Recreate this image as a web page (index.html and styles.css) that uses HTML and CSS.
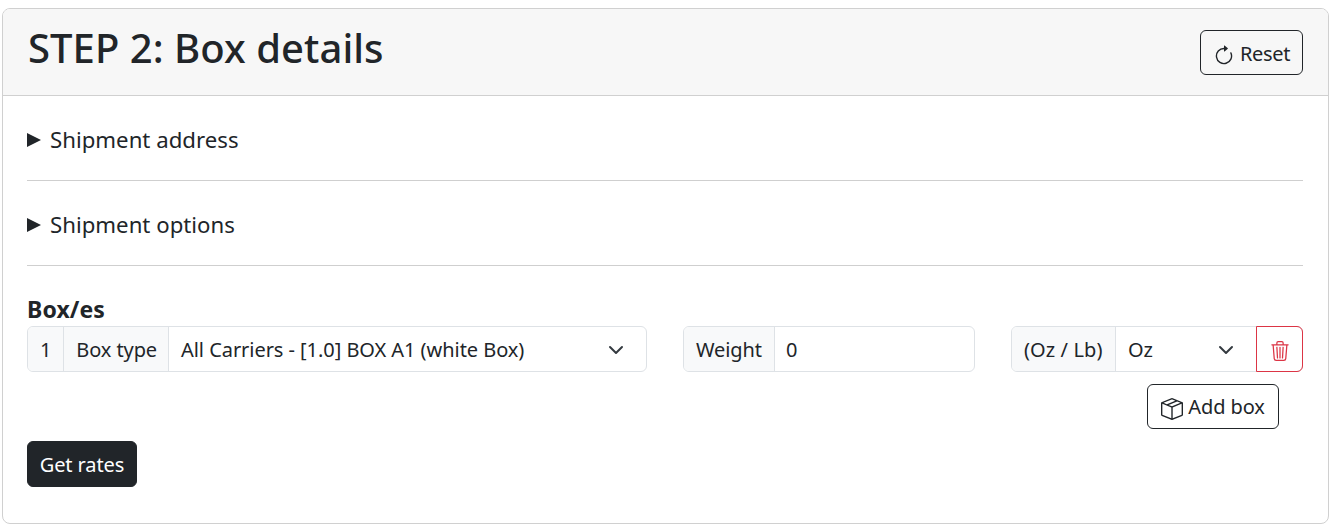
FILE: index.html
```html
<!DOCTYPE html>
<html lang="en">
<head>
  <meta charset="UTF-8">
  <meta name="viewport" content="width=device-width, initial-scale=1.0">
  <title>Box details</title>
  <link rel="stylesheet" href="styles.css">
</head>
<body>
  <div class="card">
    <div class="card-header">
      <h1>STEP 2: Box details</h1>
      <button class="btn btn-outline btn-reset" type="button">
        <svg class="icon" viewBox="0 0 16 16" fill="currentColor"><path fill-rule="evenodd" d="M8 3a5 5 0 1 0 4.546 2.914.5.5 0 0 1 .908-.417A6 6 0 1 1 8 2v1z"/><path d="M8 4.466V.534a.25.25 0 0 1 .41-.192l2.36 1.966c.12.1.12.284 0 .384L8.41 4.658A.25.25 0 0 1 8 4.466z"/></svg>
        Reset
      </button>
    </div>
    <div class="card-body">
      <details class="section">
        <summary>Shipment address</summary>
      </details>
      <hr>
      <details class="section">
        <summary>Shipment options</summary>
      </details>
      <hr>

      <!-- Boxes -->
      <div class="boxes-label">Box/es</div>
      <div class="box-row">
        <div class="input-group group-type">
          <span class="addon">1</span>
          <span class="addon">Box type</span>
          <div class="select">
            <span>All Carriers - [1.0] BOX A1 (white Box)</span>
            <svg class="chevron" viewBox="0 0 16 16"><path fill="none" stroke="#343a40" stroke-linecap="round" stroke-linejoin="round" stroke-width="2" d="m2 5 6 6 6-6"/></svg>
          </div>
        </div>
        <div class="input-group group-side">
          <span class="addon">Weight</span>
          <div class="input">0</div>
        </div>
        <div class="input-group group-side">
          <span class="addon addon-unit">(Oz / Lb)</span>
          <div class="select">
            <span>Oz</span>
            <svg class="chevron" viewBox="0 0 16 16"><path fill="none" stroke="#343a40" stroke-linecap="round" stroke-linejoin="round" stroke-width="2" d="m2 5 6 6 6-6"/></svg>
          </div>
          <button class="btn-delete" type="button">
            <svg class="icon" viewBox="0 0 16 16" fill="currentColor"><path d="M6.5 1h3a.5.5 0 0 1 .5.5v1H6v-1a.5.5 0 0 1 .5-.5ZM11 2.5v-1A1.5 1.5 0 0 0 9.5 0h-3A1.5 1.5 0 0 0 5 1.5v1H2.506a.58.58 0 0 0-.01 0H1.5a.5.5 0 0 0 0 1h.538l.853 10.66A2 2 0 0 0 4.885 16h6.23a2 2 0 0 0 1.994-1.84l.853-10.66h.538a.5.5 0 0 0 0-1h-.995a.59.59 0 0 0-.01 0H11Zm1.958 1-.846 10.58a1 1 0 0 1-.997.92h-6.23a1 1 0 0 1-.997-.92L3.042 3.5h9.916Zm-7.487 1a.5.5 0 0 1 .528.47l.5 8.5a.5.5 0 0 1-.998.06L5 5.03a.5.5 0 0 1 .47-.53Zm5.058 0a.5.5 0 0 1 .47.53l-.5 8.5a.5.5 0 1 1-.998-.06l.5-8.5a.5.5 0 0 1 .528-.47ZM8 4.5a.5.5 0 0 1 .5.5v8.5a.5.5 0 0 1-1 0V5a.5.5 0 0 1 .5-.5Z"/></svg>
          </button>
        </div>
      </div>
      <div class="add-row">
        <button class="btn btn-outline btn-add" type="button">
          <svg class="icon" viewBox="0 0 16 16" fill="currentColor"><path d="M8.186 1.113a.5.5 0 0 0-.372 0L1.846 3.5l2.404.961L10.404 2l-2.218-.887zm3.564 1.426L5.596 5 8 5.961 14.154 3.5l-2.404-.961zm3.25 1.7-6.5 2.6v7.922l6.5-2.6V4.24zM7.5 14.762V6.838L1 4.239v7.925l6.5 2.6zM7.443.184a1.5 1.5 0 0 1 1.114 0l7.129 2.852A.5.5 0 0 1 16 3.5v8.662a1 1 0 0 1-.629.928l-7.185 2.874a.5.5 0 0 1-.372 0L.63 13.09a1 1 0 0 1-.63-.928V3.5a.5.5 0 0 1 .314-.464L7.443.184z"/></svg>
          Add box
        </button>
      </div>
      <button class="btn btn-dark" type="button">Get rates</button>
    </div>
  </div>
</body>
</html>
```

FILE: styles.css
```css
/* Bootstrap-like card, Segoe-ish text set in Noto Sans */
* {
  box-sizing: border-box;
}

body {
  margin: 0;
  padding: 8px 4px 0 2px;
  font-family: "Noto Sans", Arial, sans-serif;
  font-size: 20px;
  letter-spacing: -0.1px;
  color: #212529;
  background-color: #fff;
}

.card {
  height: 516px;
  border: 1px solid #d0d0d0;
  border-radius: 8px;
  background-color: #fff;
}

.card-header {
  height: 87px;
  padding: 21px 25px 0 25px;
  display: flex;
  justify-content: space-between;
  align-items: flex-start;
  background-color: #f7f7f7;
  border-bottom: 1px solid #d0d0d0;
  border-radius: 7px 7px 0 0;
}

h1 {
  margin: -6px 0 0;
  font-size: 40px;
  font-weight: 500;
  line-height: 48px;
  letter-spacing: 0.05px;
}

.card-body {
  padding: 29px 25px 0 24px;
}

.section summary {
  display: flex;
  align-items: center;
  gap: 9px;
  font-size: 22.2px;
  line-height: 30px;
  letter-spacing: 0.02px;
  list-style: none;
  cursor: pointer;
}

/* closed marker, a bit larger than the browser's own */
.section summary::before {
  content: "";
  width: 0;
  height: 0;
  border-left: 14px solid #212529;
  border-top: 7.5px solid transparent;
  border-bottom: 7.5px solid transparent;
}

hr {
  margin: 25px 0 28px;
  border: 0;
  border-top: 1px solid #cfcfcf;
}

.section + hr {
  margin-bottom: 29px;
}

.boxes-label {
  margin-top: -1px;
  font-size: 23px;
  font-weight: 700;
  line-height: 30px;
  letter-spacing: 0.1px;
}

.box-row {
  display: flex;
  gap: 36px;
  margin-top: 2px;
}

.input-group {
  display: flex;
  height: 46px;
  border: 1px solid #dee2e6;
  border-radius: 6px;
  line-height: 46px;
  flex: 0 0 292px;
}

.group-type {
  flex: 0 0 620px;
}

.addon {
  padding: 0 12px;
  background-color: #f8f9fa;
  border-right: 1px solid #dee2e6;
  white-space: nowrap;
}

.addon:first-child {
  border-radius: 5px 0 0 5px;
}

.addon-unit {
  width: 104px;
  letter-spacing: 0.1px;
}

.select,
.input {
  flex: 1;
  padding: 0 12px;
  display: flex;
  justify-content: space-between;
  align-items: center;
}

.select {
  padding-top: 2px;
}

.group-type .addon:nth-child(2) {
  padding-right: 11px;
}

.group-type .select {
  letter-spacing: -0.05px;
}

.input {
  display: block;
  padding-left: 11px;
}

.chevron {
  width: 16px;
  height: 16px;
  margin-right: 10px;
  flex: none;
}

.btn-delete {
  width: 47px;
  height: 46px;
  margin: -1px -1px -1px 0;
  padding: 3px 0 0;
  color: #dc3545;
  background: none;
  border: 1px solid #dc3545;
  border-radius: 0 6px 6px 0;
}

.btn {
  font: inherit;
  letter-spacing: inherit;
  color: #212529;
  border-radius: 6px;
  padding: 0 12px;
  background: none;
  border: 1px solid #212529;
  white-space: nowrap;
}

.icon {
  width: 20px;
  height: 20px;
  vertical-align: -4px;
}

.btn-outline .icon {
  width: 22px;
  height: 22px;
  vertical-align: -6px;
}

.btn-reset {
  height: 45px;
  width: 103px;
  padding-top: 2px;
  letter-spacing: -0.3px;
}

.add-row {
  display: flex;
  justify-content: flex-end;
  padding-right: 24px;
  margin-top: 12px;
}

.btn-add {
  width: 132px;
  height: 45px;
}

.btn-dark {
  display: block;
  margin-top: 12px;
  width: 110px;
  height: 46px;
  padding: 0;
  color: #fff;
  background-color: #212529;
}
```
